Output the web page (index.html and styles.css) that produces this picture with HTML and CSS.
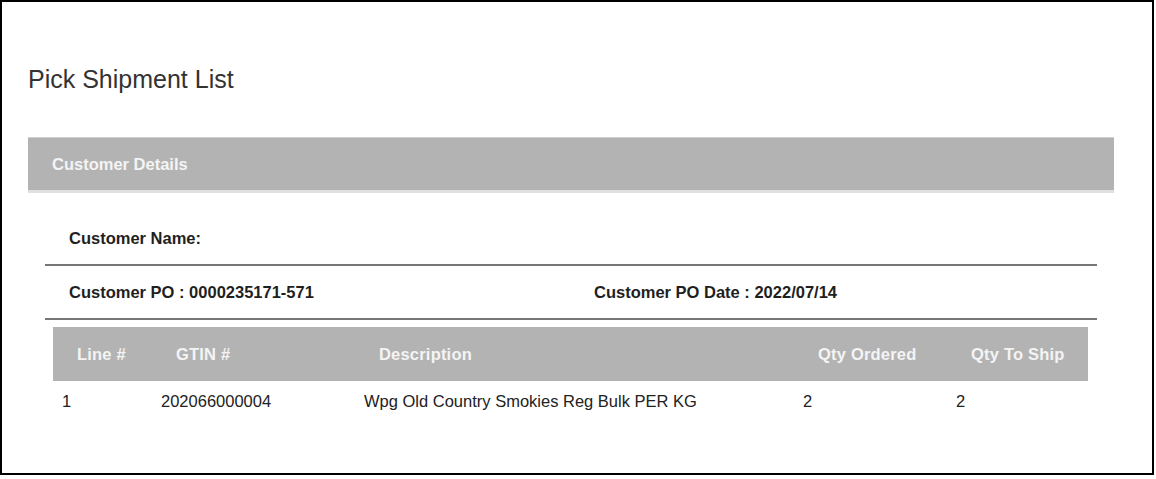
FILE: index.html
```html
<!DOCTYPE html>
<html lang="en">
<head>
<meta charset="utf-8">
<title>Pick Shipment List</title>
<link rel="stylesheet" href="styles.css">
</head>
<body>
<div class="frame">
  <h1 class="title">Pick Shipment List</h1>
  <div class="section-bar">Customer Details</div>
  <div class="details">
    <div class="detail-row">
      <div class="label">Customer Name:</div>
    </div>
    <div class="detail-row two-col">
      <div class="label">Customer PO : 0000235171-571</div>
      <div class="label">Customer PO Date : 2022/07/14</div>
    </div>
  </div>
  <table class="items">
    <colgroup>
      <col class="c-line">
      <col class="c-gtin">
      <col class="c-desc">
      <col class="c-qo">
      <col class="c-qs">
    </colgroup>
    <thead>
      <tr>
        <th>Line #</th>
        <th>GTIN #</th>
        <th>Description</th>
        <th>Qty Ordered</th>
        <th>Qty To Ship</th>
      </tr>
    </thead>
    <tbody>
      <tr>
        <td>1</td>
        <td>202066000004</td>
        <td>Wpg Old Country Smokies Reg Bulk PER KG</td>
        <td>2</td>
        <td>2</td>
      </tr>
    </tbody>
  </table>
</div>
</body>
</html>
```

FILE: styles.css
```css
html, body {
  margin: 0;
  padding: 0;
  background: #ffffff;
}

body {
  font-family: "Liberation Sans", Arial, sans-serif;
  color: #222222;
}

.frame {
  box-sizing: border-box;
  width: 1154px;
  height: 475px;
  border: 2px solid #000000;
  padding: 63px 0 0 26px;
}

.title {
  margin: 0;
  font-size: 25px;
  line-height: 29px;
  font-weight: normal;
  color: #333333;
}

.section-bar {
  margin-top: 43px;
  width: 1086px;
  box-sizing: border-box;
  height: 56px;
  border-top: 1px solid #d0d0d0;
  border-bottom: 3px solid #e0e0e0;
  background: #b3b3b3;
  color: #f4f4f4;
  font-weight: bold;
  font-size: 16.5px;
  line-height: 52px;
  padding-left: 24px;
}

.details {
  margin: 19px 0 0 17px;
  width: 1052px;
}

.detail-row {
  height: 52px;
  display: flex;
  align-items: center;
  padding-left: 24px;
}

.detail-row + .detail-row {
  border-top: 2px solid #777777;
  border-bottom: 2px solid #777777;
}

.two-col {
  display: grid;
  grid-template-columns: 525px 1fr;
  align-items: center;
}

.label {
  font-weight: bold;
  font-size: 16.5px;
  color: #1f1f1f;
}

.items {
  margin: 7px 0 0 25px;
  width: 1035px;
  border-collapse: collapse;
  table-layout: fixed;
  font-size: 16.5px;
}

.c-line { width: 99px; }
.c-gtin { width: 203px; }
.c-desc { width: 439px; }
.c-qo { width: 153px; }
.c-qs { width: 141px; }

.items th {
  background: #b3b3b3;
  color: #f4f4f4;
  font-weight: bold;
  text-align: left;
  height: 54px;
  padding: 0 0 0 24px;
  letter-spacing: 0.2px;
}

.items td {
  height: 40px;
  padding: 0 0 0 9px;
  color: #222222;
}
```
